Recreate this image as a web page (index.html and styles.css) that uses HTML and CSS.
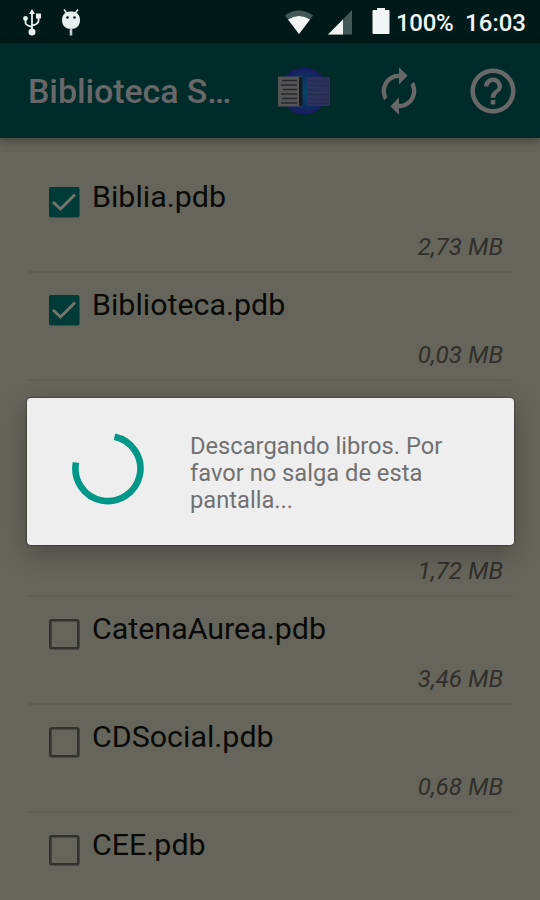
FILE: index.html
```html
<!DOCTYPE html>
<html lang="es">
<head>
<meta charset="utf-8">
<title>Biblioteca</title>
<link rel="stylesheet" href="styles.css">
</head>
<body>
<div class="screen">
  <header class="status">
    <svg class="usb" width="18" height="28" viewBox="0 0 18 28"><g fill="none" stroke="#e8efee" stroke-width="1.800"><path d="M9 4v19M2.500 10v4q0 2 6.500 4M15.500 7v5q0 3-6.500 4.500"/></g><g fill="#e8efee"><path d="M9 0l3 5H6z"/><circle cx="9" cy="23" r="3.500"/><circle cx="2.500" cy="9.500" r="2.400"/><path d="M13 4.500h5v5h-5z"/></g></svg>
    <svg class="debug" width="20" height="28" viewBox="0 0 20 28"><path d="M3 .5l3 4M17 .5l-3 4" stroke="#e8efee" stroke-width="1.500"/><path d="M1 11C1 5 5 2.500 10 2.500S19 5 19 11 15 20 10 20 1 17 1 11z" fill="#e8efee"/><path d="M8.700 19h2.600v7.500H8.700z" fill="#c3cfce"/><circle cx="6.500" cy="8.500" r="1.300" fill="#001a19"/><circle cx="13.500" cy="8.500" r="1.300" fill="#001a19"/></svg>
    <svg class="wifi" width="30" height="25" viewBox="0 0 30 25"><path d="M1 5.500Q15-4.500 29 5.500L15 24z" fill="#425957"/><path d="M4 9.500Q15 2.500 26 9.500L15 24z" fill="#f1f5f5"/></svg>
    <svg class="signal" width="24" height="25" viewBox="0 0 24 25"><path d="M0 24.500L24 0v24.500z" fill="#425957"/><path d="M0 24.500L15 9.500v15z" fill="#f1f5f5"/></svg>
    <svg class="battery" width="18" height="26" viewBox="0 0 18 26"><path d="M5 0h8v2h3.500q1 0 1 1v22q0 1-1 1h-15q-1 0-1-1V3q0-1 1-1H5z" fill="#f1f5f5"/></svg>
    <span class="percent">100%</span>
    <span class="clock">16:03</span>
  </header>
  <div class="toolbar">
    <h1>Biblioteca S…</h1>
    <svg class="book" width="54" height="48" viewBox="0 0 54 48"><defs><radialGradient id="globe"><stop offset="0" stop-color="#084468"/><stop offset=".55" stop-color="#0b3560"/><stop offset="1" stop-color="#171b60"/></radialGradient></defs><circle cx="27" cy="24" r="23.500" fill="url(#globe)"/><path d="M1 9.500h24v30H1z" fill="#555"/><path d="M22 10h3.500v29H22z" fill="#171b20"/><path d="M30 10h23v29H30z" fill="#33335a" opacity=".85"/><path d="M5 13.500h15M4 18h16M6 22.500h14M4 27h16M5 31.500h15M4 36h16" stroke="#25282b" stroke-width="1.500"/><path d="M31 14h18M31 18.500h20M31 23h18M31 27.500h20M31 32h19M31 36.500h20" stroke="#222a4c" stroke-width="1.200"/></svg>
    <svg class="sync" width="52" height="52" viewBox="0 0 24 24"><path fill="#686769" d="M12 6v3l4-4-4-4v3c-4.420 0-8 3.580-8 8 0 1.570.46 3.030 1.240 4.260L6.700 14.800c-.45-.83-.7-1.790-.7-2.800 0-3.310 2.690-6 6-6zm6.760 1.740L17.300 9.200c.44.840.7 1.790.7 2.800 0 3.310-2.690 6-6 6v-3l-4 4 4 4v-3c4.420 0 8-3.580 8-8 0-1.570-.46-3.030-1.240-4.260z"/></svg>
    <svg class="help" width="54" height="54" viewBox="0 0 24 24"><path fill="#686769" d="M11 18h2v-2h-2v2zm1-16C6.480 2 2 6.480 2 12s4.480 10 10 10 10-4.480 10-10S17.520 2 12 2zm0 18c-4.410 0-8-3.590-8-8s3.590-8 8-8 8 3.590 8 8-3.590 8-8 8zm0-14c-2.210 0-4 1.790-4 4h2c0-1.100.9-2 2-2s2 .9 2 2c0 2-3 1.750-3 5h2c0-2.250 3-2.500 3-5 0-2.210-1.790-4-4-4z"/></svg>
  </div>
  <main class="list">
    <div class="row"><svg class="box" viewBox="0 0 32 32"><rect x="1" y="1" width="30.500" height="30.500" rx="2" fill="#003b37"/><path d="M5 16l7.500 7L27 8.500" fill="none" stroke="#73746b" stroke-width="3"/></svg><span class="name">Biblia.pdb</span><span class="size">2,73 MB</span></div>
    <div class="row"><svg class="box" viewBox="0 0 32 32"><rect x="1" y="1" width="30.500" height="30.500" rx="2" fill="#003b37"/><path d="M5 16l7.500 7L27 8.500" fill="none" stroke="#73746b" stroke-width="3"/></svg><span class="name">Biblioteca.pdb</span><span class="size">0,03 MB</span></div>
    <div class="row"></div>
    <div class="row"><span class="size">1,72 MB</span></div>
    <div class="row"><svg class="box" viewBox="0 0 32 32"><rect x="2.300" y="2.300" width="28" height="28" rx="1.500" fill="none" stroke="#32322c" stroke-width="2.600"/></svg><span class="name">CatenaAurea.pdb</span><span class="size">3,46 MB</span></div>
    <div class="row"><svg class="box" viewBox="0 0 32 32"><rect x="2.300" y="2.300" width="28" height="28" rx="1.500" fill="none" stroke="#32322c" stroke-width="2.600"/></svg><span class="name">CDSocial.pdb</span><span class="size">0,68 MB</span></div>
    <div class="row"><svg class="box" viewBox="0 0 32 32"><rect x="2.300" y="2.300" width="28" height="28" rx="1.500" fill="none" stroke="#32322c" stroke-width="2.600"/></svg><span class="name">CEE.pdb</span></div>
  </main>
  <div class="dialog">
    <svg class="spinner" width="72" height="72" viewBox="0 0 72 72"><path d="M42.500 3.700A32.500 32.500 0 1 1 4 29.500" fill="none" stroke="#009688" stroke-width="6.600"/></svg>
    <p>Descargando libros. Por<br>favor no salga de esta<br>pantalla...</p>
  </div>
</div>
</body>
</html>
```
FILE: styles.css
```css
* { box-sizing: border-box; }
body { margin: 0; font-family: Roboto, "Liberation Sans", sans-serif; }
svg { display: block; flex: none; }
.screen { position: relative; width: 540px; height: 900px; overflow: hidden; background: #66655b; }
.status { display: flex; height: 43px; padding: 9px 14px 0 23px; background: #001a19; color: #f1f5f5; font-size: 24px; font-weight: 500; line-height: 28px; white-space: nowrap; }
.debug { margin-left: 20px; }
.wifi { margin: 1px 0 0 203px; }
.signal { margin: 1px 0 0 14px; }
.battery { margin: -1px 0 0 20px; }
.percent { margin-left: 6px; letter-spacing: -.3px; }
.clock { margin-left: auto; }
.toolbar { position: relative; display: flex; align-items: center; height: 95px; padding-left: 28px; background: #002b29; box-shadow: 0 3px 9px rgba(0, 0, 0, .35); }
h1 { width: 249px; margin: 1px 0 0; color: #686769; font-size: 34px; font-weight: 500; line-height: 40px; letter-spacing: -.1px; white-space: nowrap; }
.book { margin-top: 1px; }
.sync { margin-left: 42px; }
.help { margin-left: 41px; }
.list { padding: 27px 27px 0 28px; }
.row { display: grid; grid-template-columns: 64px 1fr; grid-template-rows: 62px 43px; height: 108px; padding-right: 10px; border-bottom: 2px solid #5f5e55; }
.row:last-child { border: 0; }
.box { width: 32px; height: 32px; margin: 21px 0 0 20px; }
.name { padding-top: 12px; color: #090a06; font-size: 30.4px; line-height: 40px; }
.size { grid-column: 1 / -1; grid-row: 2; justify-self: end; padding-top: 4px; color: #30302a; font-size: 24.200px; font-style: italic; line-height: 32px; }
.dialog { position: absolute; left: 27px; top: 398px; display: flex; width: 487px; height: 147px; padding: 35px 45px; border-radius: 4px; background: #eee; box-shadow: 0 0 2px rgba(0, 0, 0, .8), 0 8px 26px rgba(0, 0, 0, .28); }
.dialog p { margin: 0 0 0 46px; color: #717171; font-size: 23.700px; line-height: 27px; white-space: nowrap; }
```
